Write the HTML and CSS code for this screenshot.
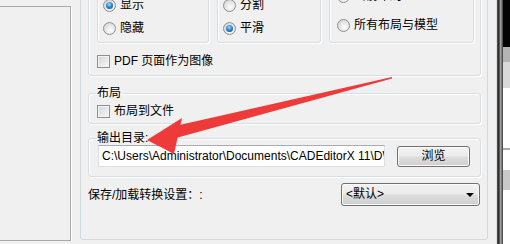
FILE: index.html
```html
<!doctype html>
<html>
  <head>
    <meta charset="utf-8">
    <title>导出设置</title>
    <link rel="stylesheet" href="styles.css">
  </head>
  <body>
    <div class="screen">
      <div class="side-panel"></div>
      <div class="dialog">
        <div class="export-box">
          <div class="radio-groups">
            <div class="group g1">
              <div class="opt"><span class="radio on"></span>显示</div>
              <div class="opt"><span class="radio"></span>隐藏</div>
            </div>
            <div class="group g2">
              <div class="opt"><span class="radio"></span>分割</div>
              <div class="opt"><span class="radio on"></span>平滑</div>
            </div>
            <div class="group g3">
              <div class="opt"><span class="radio"></span>当前布局</div>
              <div class="opt"><span class="radio"></span>所有布局与模型</div>
            </div>
          </div>
          <div class="opt pdf"><span class="check"></span>PDF 页面作为图像</div>
        </div>

        <fieldset class="frame layout">
          <legend>布局</legend>
          <div class="opt"><span class="check"></span>布局到文件</div>
        </fieldset>

        <fieldset class="frame output">
          <legend>输出目录:</legend>
          <div class="path-row">
            <div class="path-input">C:\Users\Administrator\Documents\CADEditorX 11\DWG</div>
            <div class="btn">浏览</div>
          </div>
        </fieldset>

        <div class="settings-row">
          <span>保存/加载转换设置：:</span>
          <div class="combo">&lt;默认&gt;<span class="caret"></span></div>
        </div>
      </div>
      <div class="gutter"></div>
      <div class="bd-edge"></div>
      <div class="bd-bar"></div>
      <div class="bd-app">
        <div class="bd-black"></div>
        <div class="bd-tool"></div>
        <div class="bd-strip"></div>
        <div class="bd-white"></div>
        <div class="bd-line"></div>
        <div class="bd-white short"></div>
        <div class="bd-row"></div>
        <div class="bd-white rest"></div>
      </div>
    </div>

    <svg class="pointer" width="510" height="244" viewBox="0 0 510 244">
      <polygon points="392,77 392,78.6 176,138 175,126" fill="#ef3a3a"/>
      <polygon points="147,140 182,118 174,154" fill="#ef3a3a"/>
    </svg>
  </body>
</html>
```

FILE: styles.css
```css
* { box-sizing: border-box; }
body { margin: 0; background: #f0f0f0; color: #000; overflow: hidden;
  font: 12px/14px "Liberation Sans", "Noto Sans CJK SC", sans-serif; }
.screen { display: flex; width: 510px; height: 244px; overflow: hidden; }

/* left pane */
.side-panel { flex: none; width: 71px; height: 235px; margin-top: 6px;
  border: 1px solid #a9a9a9; border-left: 0; box-shadow: 1px 0 0 #fff; }

/* main tab page */
.dialog { flex: none; width: 408px; height: 280px; margin: -40px 0 0 9px;
  padding: 9px 6px 0 7px; border: 1px solid #d4d9de; border-radius: 0 0 3px 3px; }

.export-box, .group, .frame { border: 1px solid #d5dfe5; border-radius: 3px;
  box-shadow: inset 1px 1px 0 #fff, 1px 1px 0 #fff; }
.export-box { padding: 8px 6px 6px 8px; }
.radio-groups { display: flex; gap: 8px; }
.group { height: 64px; display: flex; flex-direction: column; gap: 7px; padding: 17px 0 0 5px; }
.g1 { width: 112px; }
.g2 { width: 104px; }
.g3 { width: 145px; padding: 8px 0 0 7px; gap: 13px; }

.opt { display: flex; align-items: center; gap: 4px; height: 16px; white-space: nowrap; }
.pdf { margin-top: 10px; }

.radio { flex: none; width: 13px; height: 13px; border-radius: 50%; border: 1px solid #8e8f8f;
  background: radial-gradient(circle at 60% 65%, #fdfdfd 0%, #e4e4e4 55%, #c9c9c9 100%);
  position: relative; }
.radio.on::after { content: ""; position: absolute; left: 2px; top: 2px; width: 7px; height: 7px;
  border-radius: 50%; background: radial-gradient(circle at 45% 35%, #a6dcff 0%, #2c8ad6 45%, #0d3f78 100%); }

.check { flex: none; width: 13px; height: 13px; border: 1px solid #8e8f8f;
  background: linear-gradient(135deg, #cfd3d8 0%, #e6e7e9 50%, #f7f7f7 100%);
  box-shadow: inset 0 0 0 1px #f4f4f4; }

/* group frames */
.frame { margin: 0; min-width: 0; padding: 0 10px 0 8px; }
.frame legend { padding: 0 1px; margin-left: -1px; line-height: 14px; }
.layout { margin-top: 10px; padding-top: 3px; padding-bottom: 4px; }
.output { margin-top: 7px; padding-bottom: 9px; }

.path-row { display: flex; align-items: flex-end; margin-left: 1px; }
.path-input { width: 287px; height: 22px; padding: 0 3px; line-height: 20px; background: #fff;
  border: 1px solid #dbdfe6; border-top-color: #abadb3; white-space: nowrap; overflow: hidden; }
.btn, .combo { border: 1px solid #707070; border-radius: 3px;
  background: linear-gradient(#f2f2f2 0%, #ebebeb 48%, #dddddd 52%, #cfcfcf 100%);
  box-shadow: inset 0 0 0 1px #fbfbfb; }
.btn { width: 73px; height: 21px; margin-left: 12px; text-align: center; line-height: 19px; }

.settings-row { display: flex; align-items: center; justify-content: space-between;
  margin-top: 6px; height: 23px; padding-right: 1px; }
.combo { width: 139px; height: 23px; line-height: 21px; padding-left: 4px; position: relative; }
.caret { position: absolute; right: 5px; top: 9px; border: 4px solid transparent;
  border-top: 4px solid #000; border-bottom: 0; }

/* window behind */
.gutter { flex: none; width: 8px; }
.bd-edge { flex: none; width: 1px; background: #dcdcdc; }
.bd-bar { flex: none; width: 6px; background: linear-gradient(90deg, #5a5a5a, #262626 30%, #a6a6a6 60%, #6e6e6e 80%, #3a3a3a); }
.bd-app { flex: none; width: 7px; display: flex; flex-direction: column; }
.bd-black { height: 47px; background: #050505; }
.bd-tool { height: 15px; background: #b4b4b4; }
.bd-strip { height: 26px; background: #d9d9d9; }
.bd-white { height: 60px; background: #fff; }
.bd-line { height: 2px; background: #a8a8a8; }
.bd-white.short { height: 20px; }
.bd-row { height: 20px; background: #c9c9c9; }
.bd-white.rest { flex: 1; }

.pointer { position: absolute; left: 0; top: 0; pointer-events: none; }
```
